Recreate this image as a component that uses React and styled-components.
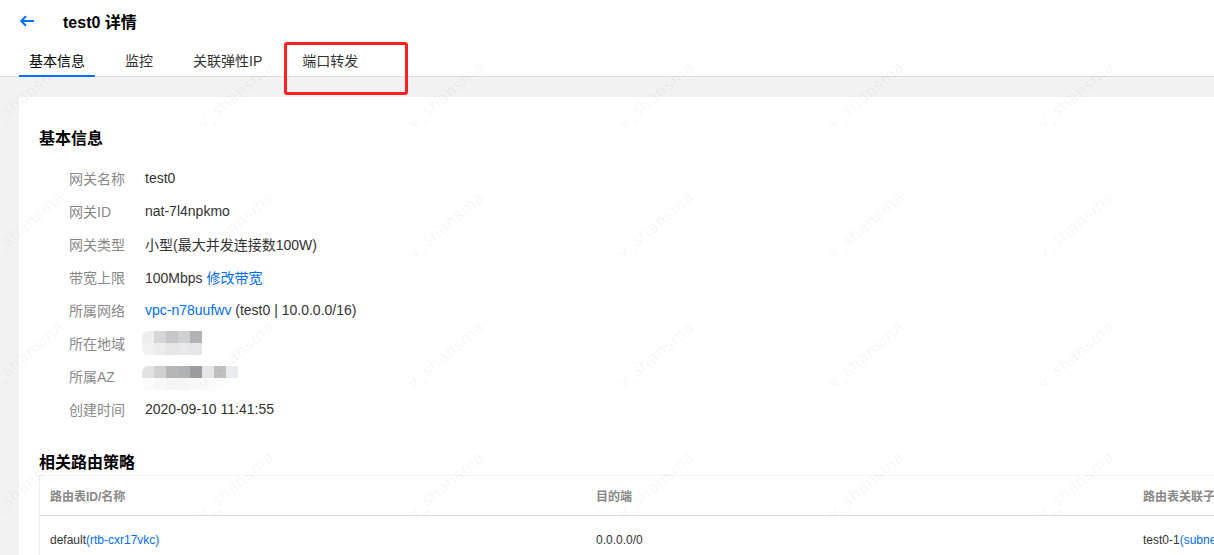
import * as React from 'react';
import styled, { createGlobalStyle } from 'styled-components';

const GlobalStyle = createGlobalStyle`
    html, body {
        margin: 0;
        padding: 0;
        background: #fff;
        overflow: hidden;
    }
    body {
        font-family: "Liberation Sans", "Noto Sans CJK SC", sans-serif;
        font-size: 14px;
        color: #333;
    }
`;

const BLUE = '#006eff';

const basicInfo = [
    { label: '网关名称', value: 'test0' },
    { label: '网关ID', value: 'nat-7l4npkmo' },
    { label: '网关类型', value: '小型(最大并发连接数100W)' },
    { label: '带宽上限', value: '100Mbps', link: '修改带宽' },
    { label: '所属网络', vpc: 'vpc-n78uufwv', value: ' (test0 | 10.0.0.0/16)' },
    {
        label: '所在地域',
        mosaic: [
            ['#eeeeee', '#d6d6d8', '#c4c6ca', '#d0d1d3', '#b0b2b6'],
            ['#f2f2f2', '#ececec', '#e6e6e6', '#e8e8ea', '#e6e6e8']
        ]
    },
    {
        label: '所属AZ',
        shift: 2,
        mosaic: [
            ['#e2e2e2', '#cfcfd0', '#b4b6b9', '#b0b2b5', '#9a9ca0', '#e6e6e8', '#c0c0c0', '#e8ecf0'],
            ['#fbfbfb', '#f8f8f8', '#f5f5f5', '#f6f6f6', '#f9f9f9', '#fbfbfb', '#fdfdfd', '#fff']
        ]
    },
    { label: '创建时间', value: '2020-09-10 11:41:55' }
];

const tabs = ['基本信息', '监控', '关联弹性IP', '端口转发'];

// watermark grid, measured off the screenshot
const marks = [];
for (let j = -2; j <= 3; j += 1) {
    for (let k = -2; k <= 4; k += 1) {
        marks.push({ x: 414 + 210 * k, y: 260 + 130 * j });
    }
}

function BackArrow() {
    return (
        <svg width="16" height="12" viewBox="0 0 16 12" fill="none">
            <path d="M15 6H2.5" stroke={BLUE} strokeWidth="2" />
            <path d="M7 1.2 2.2 6 7 10.8" stroke={BLUE} strokeWidth="2" />
        </svg>
    );
}

export default function App() {
    return (
        <Page>
            <GlobalStyle />
            <Header>
                <TitleRow>
                    <BackArrow />
                    <Title>test0 详情</Title>
                </TitleRow>
                <TabBar>
                    {tabs.map((t, i) => (
                        <Tab key={t} active={i === 0}>
                            {t}
                            {i === 3 && <Annotation />}
                        </Tab>
                    ))}
                </TabBar>
            </Header>
            <Body>
                <Card>
                    <SectionTitle gap={10}>基本信息</SectionTitle>
                    <InfoList>
                        {basicInfo.map((row) => (
                            <InfoRow key={row.label}>
                                <Label>{row.label}</Label>
                                <Value>
                                    {row.vpc && <Link>{row.vpc}</Link>}
                                    {row.value}
                                    {row.link && <Link> {row.link}</Link>}
                                    {row.mosaic && (
                                        <Mosaic shift={row.shift}>
                                            {row.mosaic.map((cells, ri) => (
                                                <MosaicRow key={ri}>
                                                    {cells.map((c, ci) => (
                                                        <Cell key={ci} style={{ background: c }} />
                                                    ))}
                                                </MosaicRow>
                                            ))}
                                        </Mosaic>
                                    )}
                                </Value>
                            </InfoRow>
                        ))}
                    </InfoList>
                    <SectionTitle gap={0}>相关路由策略</SectionTitle>
                    <Table>
                        <HeadCell>路由表ID/名称</HeadCell>
                        <HeadCell>目的端</HeadCell>
                        <HeadCell>路由表关联子网</HeadCell>
                        <BodyCell>default<Link>(rtb-cxr17vkc)</Link></BodyCell>
                        <BodyCell>0.0.0.0/0</BodyCell>
                        <BodyCell>test0-1<Link>(subnet-xxxxxxxx)</Link></BodyCell>
                    </Table>
                </Card>
            </Body>
            <Watermarks>
                {marks.map((m) => (
                    <Mark key={`${m.x}-${m.y}`} style={{ left: m.x, top: m.y }}>v_shansma</Mark>
                ))}
            </Watermarks>
        </Page>
    );
}

const Page = styled.div`
    position: relative;
    height: 555px;
    overflow: hidden;
    display: flex;
    flex-direction: column;
`;

const Header = styled.div`
    background: #fff;
    padding-left: 19px;
`;

const TitleRow = styled.div`
    height: 42px;
    display: flex;
    align-items: center;
    gap: 28px;
`;

const Title = styled.h1`
    margin: 0;
    font-size: 16px;
    font-weight: bold;
    color: #000;
`;

const TabBar = styled.div`
    display: flex;
    gap: 20px;
    height: 34px;
    border-bottom: 1px solid #ddd;
    margin-left: -19px;
    padding-left: 19px;
`;

const Tab = styled.div`
    position: relative;
    height: 35px;
    box-sizing: border-box;
    padding: 5px 10px 0;
    line-height: 28px;
    font-size: 14px;
    color: ${(p) => (p.active ? '#000' : '#333')};
    border-bottom: 2px solid ${(p) => (p.active ? BLUE : 'transparent')};
    white-space: nowrap;
`;

const Annotation = styled.span`
    position: absolute;
    left: -8px;
    top: 0;
    width: 124px;
    height: 53px;
    box-sizing: border-box;
    border: 3px solid #ff2020;
    border-radius: 3px;
    z-index: 5;
`;

const Body = styled.div`
    flex: 1;
    background: #f2f2f2;
    padding: 20px 0 0 19px;
    display: flex;
`;

const Card = styled.div`
    flex: 1;
    background: #fff;
    padding: 30px 0 0 20px;
`;

const SectionTitle = styled.h2`
    margin: 0 0 ${(p) => p.gap}px;
    font-size: 16px;
    line-height: 24px;
    font-weight: bold;
    color: #000;
`;

const InfoList = styled.div`
    padding-left: 30px;
    margin-bottom: 26px;
`;

const InfoRow = styled.div`
    display: flex;
    align-items: center;
    height: 33px;
    font-size: 14px;
`;

const Label = styled.div`
    width: 76px;
    color: #888;
`;

const Value = styled.div`
    color: #333;
    white-space: nowrap;
`;

const Link = styled.span`
    color: ${BLUE};
`;

const Mosaic = styled.div`
    margin: ${(p) => (p.shift || 0) * 2}px 0 0 -3px;
    filter: blur(0.6px);
`;

const MosaicRow = styled.div`
    display: flex;

    &:first-child > span:first-child {
        border-radius: 6px 0 0 0;
    }
    &:last-child > span:first-child {
        border-radius: 0 0 0 6px;
    }
`;

const Cell = styled.span`
    width: 12px;
    height: 12px;
`;

const Table = styled.div`
    display: grid;
    grid-template-columns: 546px 547px 547px;
    width: max-content;
    border-left: 1px solid #eee;
    border-top: 1px solid #f4f4f4;
    font-size: 12px;
`;

const HeadCell = styled.div`
    height: 39px;
    display: flex;
    align-items: center;
    padding-left: 10px;
    color: #888;
    font-weight: bold;
    border-bottom: 1px solid #ddd;
    white-space: nowrap;
`;

const BodyCell = styled.div`
    height: 47px;
    display: flex;
    align-items: center;
    padding-left: 10px;
    color: #333;
    white-space: nowrap;
`;

const Watermarks = styled.div`
    position: absolute;
    inset: 0;
    pointer-events: none;
    z-index: 10;
`;

const Mark = styled.span`
    position: absolute;
    font-family: "DejaVu Sans", sans-serif;
    font-size: 16px;
    line-height: 13px;
    letter-spacing: 0.5px;
    color: rgba(0, 0, 0, 0.055);
    white-space: nowrap;
    transform: translateY(-100%) rotate(-40deg);
    transform-origin: left bottom;
`;
